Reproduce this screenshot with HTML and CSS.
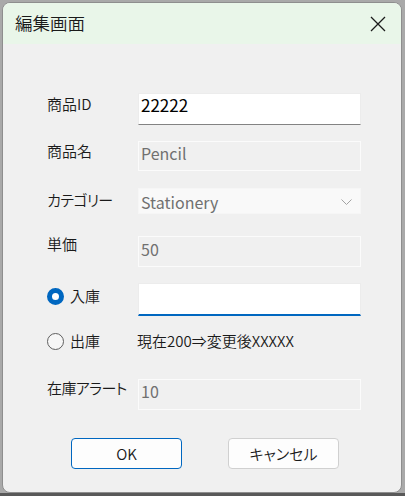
FILE: index.html
```html
<!DOCTYPE html>
<html lang="ja">
<head>
<meta charset="utf-8">
<title>編集画面</title>
<link rel="stylesheet" href="styles.css">
</head>
<body>
<div class="window">
  <div class="titlebar">
    <span class="title">編集画面</span>
    <svg class="close" width="16" height="16" viewBox="0 0 16 16"><path d="M1 1 L15 15 M15 1 L1 15" stroke="#1b1b1b" stroke-width="1.3" fill="none"/></svg>
  </div>
  <div class="form">
    <div class="row r1">
      <div class="label l1">商品ID</div>
      <div class="field edit h32"><span class="val big">22222</span></div>
    </div>
    <div class="row r2">
      <div class="label l2">商品名</div>
      <div class="field dis h30"><span class="val p0">Pencil</span></div>
    </div>
    <div class="row r3">
      <div class="label l3 narrow">カテゴリー</div>
      <div class="field combo h26"><span class="val p3">Stationery</span>
        <svg class="chev" width="11" height="6" viewBox="0 0 11 6"><path d="M0.5 0.5 L5.5 5.5 L10.5 0.5" stroke="#a3a3a3" stroke-width="1" fill="none"/></svg>
      </div>
    </div>
    <div class="row r4">
      <div class="label l4">単価</div>
      <div class="field dis h31"><span class="val p2">50</span></div>
    </div>
    <div class="row r5">
      <div class="label radio-label l5"><span class="radio on"></span><span>入庫</span></div>
      <div class="field focus h33"></div>
    </div>
    <div class="row r6">
      <div class="label radio-label"><span class="radio"></span><span>出庫</span></div>
      <div class="info">現在200⇒変更後XXXXX</div>
    </div>
    <div class="row r7">
      <div class="label l7 narrow">在庫アラート</div>
      <div class="field dis h31"><span class="val p1">10</span></div>
    </div>
    <div class="buttons">
      <button class="btn primary">OK</button>
      <button class="btn">キャンセル</button>
    </div>
  </div>
</div>
<div class="taskbar"></div>
</body>
</html>
```
FILE: styles.css
```css
html, body {
  margin: 0;
  padding: 0;
}
body {
  width: 405px;
  height: 496px;
  background: #a9a9a9;
  overflow: hidden;
  font-family: "Noto Sans CJK JP", "Noto Sans", sans-serif;
  font-feature-settings: "palt";
  font-weight: 350;
  color: #1a1a1a;
}
.window {
  box-sizing: border-box;
  margin: 2px 0 0 2px;
  width: 400px;
  height: 491px;
  border: 1px solid #8e8e8e;
  border-radius: 8px;
  background: #f0f0f0;
  overflow: hidden;
}
.taskbar {
  height: 3px;
  background: #595959;
}
.titlebar {
  height: 41px;
  background: #e9f6e9;
  display: flex;
  align-items: center;
  justify-content: space-between;
  padding: 0 15px 0 12px;
}
.title {
  font-size: 17.5px;
  line-height: 22px;
  margin-top: -2px;
}
.form {
  padding-left: 44px;
}
.row {
  display: flex;
  align-items: flex-start;
}
.label {
  width: 91px;
  flex: none;
  font-size: 15px;
  line-height: 20px;
}
.narrow {
  letter-spacing: -0.6px;
}
.l1 { margin-top: 1px; }
.l2 { margin-top: 0; }
.l3 { margin-top: 2px; }
.l4 { margin-top: -2px; }
.l5 { margin-top: 3px; }
.l7 { margin-top: -1px; }
.r1 { margin-top: 49px; }
.r2 { margin-top: 16px; }
.r3 { margin-top: 17px; }
.r4 { margin-top: 22px; }
.r5 { margin-top: 16px; }
.r6 { margin-top: 15px; height: 20px; }
.r7 { margin-top: 28px; }
.field {
  box-sizing: border-box;
  width: 223px;
  padding: 0 2px;
  position: relative;
}
.h26 { height: 26px; }
.h30 { height: 30px; }
.h31 { height: 31px; }
.h32 { height: 32px; }
.h33 { height: 33px; }
.edit {
  background: #ffffff;
  border: 1px solid #ececec;
  border-bottom: 1px solid #838383;
}
.dis {
  background: #f0f0f0;
  border: 1px solid #fbfbfb;
}
.combo {
  background: #f9f9f9;
  border: 1px solid #f6f6f6;
}
.focus {
  background: #ffffff;
  border: 1px solid #ececec;
  border-bottom: 2px solid #0067c0;
}
.val {
  display: block;
  font-size: 16px;
  line-height: 20px;
  font-weight: 400;
  color: #707070;
}
.val.big {
  font-size: 17px;
  line-height: 22px;
  color: #000;
  padding-top: 0;
}
.p0 { padding-top: 1px; }
.p1 { padding-top: 1px; }
.p2 { padding-top: 2px; }
.p3 { padding-top: 3px; }
.chev {
  position: absolute;
  right: 8px;
  top: 10px;
}
.radio-label {
  display: flex;
  align-items: center;
  gap: 6px;
}
.radio {
  box-sizing: border-box;
  width: 17px;
  height: 17px;
  border-radius: 50%;
  border: 1px solid #5f5f5f;
  background: #f7f7f7;
  flex: none;
}
.radio.on {
  border: 5px solid #0067c0;
  background: #ffffff;
}
.info {
  font-size: 15px;
  line-height: 20px;
  margin-left: -1px;
}
.buttons {
  display: flex;
  gap: 46px;
  margin-top: 28px;
  padding-left: 24px;
}
.btn {
  box-sizing: border-box;
  width: 111px;
  height: 31px;
  border: 1px solid #d0d0d0;
  border-radius: 4px;
  background: #fdfdfd;
  font-family: "Noto Sans CJK JP", "Noto Sans", sans-serif;
  font-feature-settings: "palt";
  font-size: 15px;
  font-weight: 350;
  color: #1a1a1a;
  padding: 0;
}
.btn.primary {
  border-color: #0067c0;
}
```
